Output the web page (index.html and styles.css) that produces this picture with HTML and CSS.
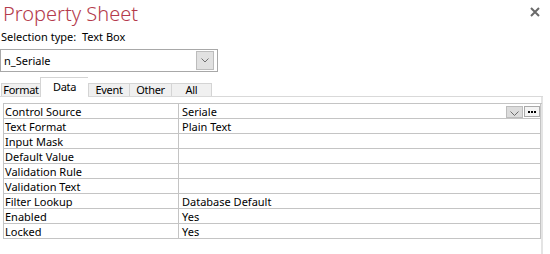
FILE: index.html
```html
<!DOCTYPE html>
<html>
<head>
<meta charset="utf-8">
<link rel="stylesheet" href="styles.css">
</head>
<body>
<div class="sheet">
  <div class="header">
    <h1 class="title">Property Sheet</h1>
    <svg class="close" width="10" height="10" viewBox="0 0 10 10"><path d="M1 1 L9 9 M9 1 L1 9" stroke="#6a6a6a" stroke-width="2" fill="none"/></svg>
  </div>
  <div class="seltype">Selection type:&nbsp; Text Box</div>
  <div class="combo">
    <span class="combo-text">n_Seriale</span>
    <span class="combo-btn"><svg width="8" height="5" viewBox="0 0 8 5"><polyline points="0.5,0.5 4,4 7.5,0.5" stroke="#707070" stroke-width="1" fill="none"/></svg></span>
  </div>
  <div class="tabs">
    <div class="tab t-format">Format</div>
    <div class="tab t-data active">Data</div>
    <div class="tab t-event">Event</div>
    <div class="tab t-other">Other</div>
    <div class="tab t-all">All</div>
  </div>
  <div class="panel">
    <div class="grid">
      <div class="cell">Control Source</div>
      <div class="cell val val-first">
        <span class="val-text">Seriale</span>
        <span class="drop-btn"><svg width="9" height="5" viewBox="0 0 9 5"><polyline points="0.5,0.5 4.5,4.5 8.5,0.5" stroke="#6a6a6a" stroke-width="1" fill="none"/></svg></span>
        <span class="dots-btn"><svg width="10" height="3" viewBox="0 0 10 3"><rect x="1" y="0" width="2" height="2" fill="#000"/><rect x="4" y="0" width="2" height="2" fill="#000"/><rect x="7" y="0" width="2" height="2" fill="#000"/></svg></span>
      </div>
      <div class="cell">Text Format</div><div class="cell val">Plain Text</div>
      <div class="cell">Input Mask</div><div class="cell val"></div>
      <div class="cell">Default Value</div><div class="cell val"></div>
      <div class="cell">Validation Rule</div><div class="cell val"></div>
      <div class="cell">Validation Text</div><div class="cell val"></div>
      <div class="cell">Filter Lookup</div><div class="cell val">Database Default</div>
      <div class="cell">Enabled</div><div class="cell val">Yes</div>
      <div class="cell">Locked</div><div class="cell val">Yes</div>
    </div>
  </div>
</div>
</body>
</html>
```

FILE: styles.css
```css
html, body {
  margin: 0;
  padding: 0;
  background: #ffffff;
}

body {
  font-family: "Noto Sans", "Open Sans", sans-serif;
  font-size: 11px;
  color: #000;
  width: 550px;
  height: 254px;
  overflow: hidden;
}

.header {
  display: flex;
  justify-content: space-between;
  align-items: flex-start;
  height: 29px;
}

.title {
  margin: 0;
  padding-left: 3px;
  font-size: 20px;
  font-weight: 300;
  line-height: 28px;
  color: #b43a4b;
}

.close {
  margin: 7px 10px 0 0;
  display: block;
}

.seltype {
  line-height: 15px;
  padding-left: 1px;
}

.combo {
  margin-top: 5px;
  width: 218px;
  height: 23px;
  box-sizing: border-box;
  border: 1px solid #a8a8a8;
  display: flex;
  align-items: center;
}

.combo-text {
  flex: 1;
  padding-left: 3px;
  line-height: 15px;
}

.combo-btn {
  width: 18px;
  height: 19px;
  box-sizing: border-box;
  border: 1px solid #bcbcbc;
  background: #e1e1e1;
  margin-right: 3px;
  display: flex;
  align-items: center;
  justify-content: center;
}

.combo-btn svg {
  display: block;
}

.tabs {
  margin-top: 5px;
  width: 543px;
  height: 20px;
  box-sizing: border-box;
  border-bottom: 1px solid #d9d9d9;
  display: flex;
  align-items: flex-end;
  padding-left: 1px;
}

.tab {
  height: 13px;
  box-sizing: border-box;
  border-top: 1px solid #d4d4d4;
  border-left: 1px solid #d4d4d4;
  background: #f0f0f0;
  line-height: 11px;
  text-align: center;
  letter-spacing: -0.3px;
  white-space: nowrap;
}

.t-format { width: 39px; }
.t-data { width: 48px; }
.t-event { width: 41px; }
.t-other { width: 42px; }
.t-all { width: 41px; border-right: 1px solid #d4d4d4; }

.tab.active {
  height: 20px;
  margin-bottom: -1px;
  padding-top: 3px;
  background: #ffffff;
  position: relative;
}

.panel {
  width: 538px;
  height: 151px;
  padding: 6px 0 0 3px;
  border-right: 2px solid #e4e4e4;
}

.grid {
  display: grid;
  grid-template-columns: 175px 362px;
  width: 538px;
  border-left: 1px solid #c4c4c4;
  border-top: 1px solid #c4c4c4;
}

.cell {
  height: 15px;
  box-sizing: border-box;
  border-right: 1px solid #c4c4c4;
  border-bottom: 1px solid #c4c4c4;
  line-height: 15px;
  padding-left: 1px;
  white-space: nowrap;
  overflow: hidden;
}

.val {
  padding-left: 3px;
}

.val-first {
  display: flex;
  align-items: flex-start;
  overflow: visible;
}

.val-text {
  flex: 1;
}

.drop-btn {
  margin-top: 2px;
  width: 17px;
  height: 12px;
  box-sizing: border-box;
  border: 1px solid #bdbdbd;
  background: #dcdcdc;
  display: flex;
  align-items: flex-end;
  justify-content: center;
  padding-bottom: 1px;
}

.drop-btn svg,
.dots-btn svg {
  display: block;
}

.dots-btn {
  margin-top: 2px;
  margin-left: 1px;
  width: 16px;
  height: 11px;
  box-sizing: border-box;
  border: 1px solid #a9a9a9;
  background: #f4f4f4;
  display: flex;
  align-items: center;
  justify-content: center;
  padding-top: 1px;
}
```
